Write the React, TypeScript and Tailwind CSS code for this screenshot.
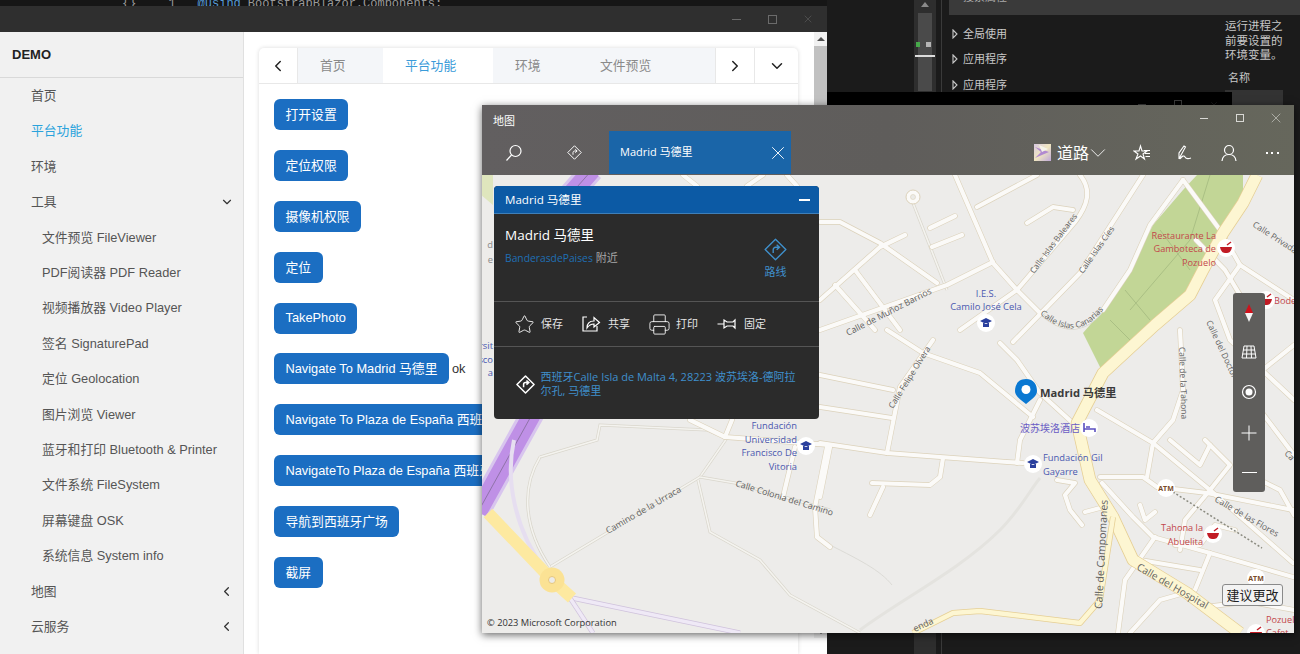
import React from 'react';
import { ChevronDown, ChevronLeft, ChevronRight, Star, Printer, X } from 'lucide-react';

const menuTop = [
  { label: '首页' },
  { label: '平台功能', active: true },
  { label: '环境' },
];

const toolItems = [
  '文件预览 FileViewer',
  'PDF阅读器 PDF Reader',
  '视频播放器 Video Player',
  '签名 SignaturePad',
  '定位 Geolocation',
  '图片浏览 Viewer',
  '蓝牙和打印 Bluetooth & Printer',
  '文件系统 FileSystem',
  '屏幕键盘 OSK',
  '系统信息 System info',
];

const buttons = [
  '打开设置',
  '定位权限',
  '摄像机权限',
  '定位',
  'TakePhoto',
  'Navigate To Madrid 马德里',
  'Navigate To Plaza de España 西班牙广场',
  'NavigateTo Plaza de España 西班牙广场',
  '导航到西班牙广场',
  '截屏',
];

// main white streets, global page coordinates
const streets = [
  'M955 175 L993 263 L1017 290 L1040 313',
  'M977 207 L1037 175',
  'M1143 175 L1080 273 L1013 342',
  'M1080 175 C1092 190 1088 205 1075 222 L1017 290 L960 330',
  'M820 330 L947 285 L993 262',
  'M1183 180 L1220 230 L1240 265 L1294 300',
  'M1183 180 L1150 225 L1130 270 L1103 310',
  'M820 375 L893 390',
  'M820 407 L892 418',
  'M820 443 L887 453 L1007 462 L1023 463',
  'M933 340 L900 387 L887 453',
  'M830 447 L820 497',
  'M943 458 L940 477 L930 485 L872 483',
  'M883 487 L870 515',
  'M887 330 L923 353 L980 373 L1033 417',
  'M1000 343 L1017 360 L1040 393 L1075 425',
  'M1040 400 L1020 440 L1017 463',
  'M1097 410 L1153 443 L1210 490 L1293 563',
  'M1100 477 L1143 477 L1157 487 L1207 493 L1293 510',
  'M1180 330 L1183 390 L1173 420 L1153 443 L1147 477',
  'M1102 483 L1133 517 L1153 537 L1210 553 L1293 577',
  'M1057 480 L1075 483 L1065 495 L1070 510 L1082 525',
  'M1085 512 L1100 508',
  'M1205 440 L1230 465 L1210 490 L1185 520 L1180 550',
  'M1175 545 L1200 545 L1215 525 L1235 530',
  'M1155 537 L1125 580 L1118 633',
  'M1210 553 L1195 590 L1160 600 L1130 633',
  'M1240 265 L1215 300 L1230 340 L1294 400',
  'M1250 380 L1294 345',
  'M1260 410 L1294 455',
  'M1196 240 L1225 270 L1240 295',
  'M1155 512 L1145 520 L1140 505',
  'M1170 440 L1200 465 L1210 445',
  'M1027 223 L1053 207 L1073 210',
  'M930 228 L955 216',
  'M932 247 L962 235',
  'M820 222 L840 222 L880 243 L937 283',
  'M820 300 L880 247 L905 235',
  'M835 285 L875 330',
  'M855 270 L900 330',
  'M1240 470 L1280 490 L1294 515',
  'M1140 560 L1200 570',
  'M1240 600 L1294 610',
  'M1205 607 L1260 600',
  'M683 175 L697 186',
  'M747 186 L763 175',
  'M787 175 L797 186',
  'M690 420 L725 437 L830 445',
  'M732 420 L725 437',
  'M795 447 L783 497',
  'M827 447 L815 507 L817 537 L830 547',
];

// thin lanes
const lanes = [
  'M913 203 L947 290',
  'M1103 310 Q1075 345 1040 313',
  'M550 567 L700 477 L727 438',
  'M540 457 L597 440 L600 425 L707 430 L723 437',
  'M700 477 L735 483 L830 510',
  'M540 457 C520 490 525 530 550 567',
  'M698 480 L710 532 L760 560 L790 595 L860 633',
];

const labels: { t: string; x: number; y: number; r: number; size: number }[] = [
  { t: 'Calle Islas Baleares', x: 1034, y: 274, r: -53, size: 8.2 },
  { t: 'Calle Islas Cíes', x: 1083, y: 274, r: -55, size: 8.2 },
  { t: 'Calle de Muñoz Barrios', x: 848, y: 336, r: -27, size: 8.8 },
  { t: 'Calle Felipe Olvera', x: 893, y: 409, r: -58, size: 8.3 },
  { t: 'Camino de la Urraca', x: 608, y: 534, r: -30, size: 9 },
  { t: 'Calle Colonia del Camino', x: 735, y: 486, r: 17, size: 8.8 },
  { t: 'Calle de Campomanes', x: 1102, y: 609, r: -87, size: 10.5 },
  { t: 'Calle del Hospital', x: 1136, y: 569, r: 30, size: 10 },
  { t: 'Calle de las Flores', x: 1214, y: 501, r: 30, size: 8.7 },
  { t: 'Calle de la Tahona', x: 1179, y: 347, r: 88, size: 8.5 },
  { t: 'Calle del Doctor', x: 1206, y: 322, r: 65, size: 8.5 },
  { t: 'Calle Privada', x: 1252, y: 226, r: 33, size: 8.5 },
  { t: 'Ca', x: 1284, y: 454, r: 45, size: 8.5 },
  { t: 'enda', x: 915, y: 632, r: -25, size: 9 },
];

const roadLabel = 'fill-[#5f5f5f]';

const MapCanvas: React.FC = () => (
  <svg
    viewBox="481 175 813 458"
    className="absolute -left-px top-[70px] w-[813px] h-[458px] font-['Open_Sans','Noto_Sans_CJK_SC',sans-serif]"
  >
    <rect x="481" y="175" width="813" height="458" fill="#edecea" />
    <path d="M481 175 L493 175 L493 205 L481 195 Z" fill="#dfe6bd" />
    {/* park */}
    <path
      d="M1197 175 L1243 175 L1243 203 L1223 233 L1203 270 L1190 295 L1155 325 L1103 373 L1083 333 L1103 310 L1130 270 L1153 225 L1183 190 Z"
      fill="#c2d696"
    />
    <path
      d="M1210 175 L1190 240 L1130 310 M1160 230 L1190 270 M1110 320 L1135 345 M1125 290 L1150 320"
      fill="none"
      stroke="#aabf84"
      strokeWidth="1"
    />
    {/* hillshade */}
    <path
      d="M860 630 C900 600 960 570 1000 530 C1020 510 1030 490 1040 478"
      fill="none"
      stroke="#e4e3df"
      strokeWidth="3"
    />
    <path d="M820 540 C860 560 880 570 892 585" fill="none" stroke="#dcdbd6" strokeWidth="1" />
    {lanes.map((d) => (
      <g key={d} fill="none">
        <path d={d} stroke="#d9d6cc" strokeWidth="3" />
        <path d={d} stroke="#f4f3ef" strokeWidth="1.6" />
      </g>
    ))}
    {/* highway on the left */}
    <path d="M592 170 L570 195 L540 400 L478 512" fill="none" stroke="#d8c5ee" strokeWidth="24" />
    <path d="M592 170 L570 195 L540 400 L478 512" fill="none" stroke="#bf90e6" strokeWidth="18" />
    <path d="M592 170 L570 195 L540 400 L478 512" fill="none" stroke="#8f73a8" strokeWidth="1" />
    <path d="M514 440 C505 480 515 530 545 570" fill="none" stroke="#e6def0" strokeWidth="4" />
    <path d="M572 598 L740 633" fill="none" stroke="#cfc2dc" strokeWidth="5" />
    <path d="M572 598 L740 633" fill="none" stroke="#efe9f6" strokeWidth="3.5" />
    <path d="M570 598 L593 633" fill="none" stroke="#cfc2dc" strokeWidth="5" />
    <path d="M570 598 L593 633" fill="none" stroke="#efe9f6" strokeWidth="3.5" />
    <path d="M488 513 L552 580 L572 598" fill="none" stroke="#fde9a0" strokeWidth="12" />
    <circle cx="552" cy="580" r="12.5" fill="#fbe294" />
    <circle cx="552" cy="580" r="3.5" fill="#ecebe8" stroke="#e8c87a" strokeWidth="1" />
    {streets.map((d) => (
      <path key={d} d={d} fill="none" stroke="#dcd2bb" strokeWidth="5.4" strokeLinecap="round" strokeLinejoin="round" />
    ))}
    {streets.map((d) => (
      <path key={d + 'w'} d={d} fill="none" stroke="#fbfaf8" strokeWidth="4.2" strokeLinecap="round" strokeLinejoin="round" />
    ))}
    {/* roundabout */}
    <circle cx="913" cy="197" r="7" fill="#fbfaf8" stroke="#dcd2bb" />
    <circle cx="913" cy="197" r="2.5" fill="#ecebe8" stroke="#dcd2bb" strokeWidth="0.6" />
    {/* main yellow roads */}
    {[
      'M1257 175 L1243 203 L1223 233 L1203 270 L1190 295 L1155 325 L1103 373 L1077 423 L1090 480 L1113 517 L1133 560 L1187 593 L1240 633',
      'M913 633 L953 613 L980 611 L1080 623 L1100 600 L1113 517',
    ].map((d, i) => (
      <g key={d} fill="none" strokeLinejoin="round">
        <path d={d} stroke="#e6cf94" strokeWidth={i ? 6 : 12.5} />
        <path d={d} stroke="#fdf6d2" strokeWidth={i ? 4.5 : 11} />
      </g>
    ))}
    <path d="M1173 492 L1262 548" fill="none" stroke="#8b8b80" strokeWidth="1.5" strokeDasharray="2 2" />
    {labels.map((l) => (
      <text
        key={l.t}
        x={l.x}
        y={l.y}
        fontSize={l.size}
        className={roadLabel}
        transform={`rotate(${l.r} ${l.x} ${l.y})`}
      >
        {l.t}
      </text>
    ))}
    <path id="canarias" d="M1040 314 Q1075 345 1104 309" fill="none" />
    <text fontSize="8.3" className={roadLabel}>
      <textPath href="#canarias">Calle Islas Canarias</textPath>
    </text>

    {/* points of interest */}
    <g fontSize="9.4" fill="#4a58b0">
      <text x="986" y="297" textAnchor="middle">I.E.S.</text>
      <text x="986" y="310" textAnchor="middle">Camilo José Cela</text>
      <text x="797" y="429" textAnchor="end">Fundación</text>
      <text x="797" y="443" textAnchor="end">Universidad</text>
      <text x="797" y="456" textAnchor="end">Francisco De</text>
      <text x="797" y="470" textAnchor="end">Vitoria</text>
      <text x="1043" y="461">Fundación Gil</text>
      <text x="1043" y="475">Gayarre</text>
      <text x="493" y="349" textAnchor="end">rsit</text>
      <text x="493" y="363" textAnchor="end">sco</text>
      <text x="493" y="376" textAnchor="end">a</text>
      <text x="1020" y="432" fontSize="10" fill="#6a5cc4">波苏埃洛酒店</text>
    </g>
    <g fontSize="9.4" fill="#8a8a8a">
      <text x="493" y="248" textAnchor="end">d</text>
      <text x="493" y="263" textAnchor="end">e</text>
    </g>
    <g fontSize="9.2" fill="#c2474a">
      <text x="1216" y="239" textAnchor="end">Restaurante La</text>
      <text x="1216" y="252" textAnchor="end">Gamboteca de</text>
      <text x="1216" y="266" textAnchor="end">Pozuelo</text>
      <text x="1274" y="304">Bode</text>
      <text x="1203" y="531" textAnchor="end">Tahona la</text>
      <text x="1203" y="545" textAnchor="end">Abuelita</text>
      <text x="1266" y="623">Pozuel</text>
      <text x="1266" y="636">Cafet</text>
    </g>
    {[[986, 323], [806, 446], [1033, 464]].map(([x, y]) => (
      <g key={x}>
        <circle cx={x} cy={y} r="9" fill="#fff" />
        <path d={`M${x - 6} ${y - 2} L${x} ${y - 5} L${x + 6} ${y - 2} L${x} ${y + 1} Z M${x - 3} ${y} V${y + 4} H${x + 3} V${y} Z`} fill="#2a3f9d" />
      </g>
    ))}
    {[[1226, 248], [1213, 534], [1266, 300], [1256, 633]].map(([x, y]) => (
      <g key={x}>
        <circle cx={x} cy={y} r="9" fill="#fff" />
        <path d={`M${x - 6} ${y - 1} H${x + 6} C${x + 5} ${y + 4} ${x + 3} ${y + 5} ${x} ${y + 5} C${x - 3} ${y + 5} ${x - 5} ${y + 4} ${x - 6} ${y - 1} Z`} fill="#c11b24" />
        <path d={`M${x + 1} ${y - 3} L${x + 5} ${y - 6}`} stroke="#c11b24" strokeWidth="1.4" />
      </g>
    ))}
    <circle cx="1089" cy="428" r="9" fill="#fff" />
    <path d="M1084 423 V432 M1084 429 H1095 V432 M1086 427 H1090" stroke="#5b4fc0" strokeWidth="1.6" fill="none" />
    {[[1166, 488], [1256, 578]].map(([x, y]) => (
      <g key={x}>
        <circle cx={x} cy={y} r="9" fill="#fff" />
        <text x={x} y={y + 2.5} fontSize="7" fontWeight="700" fill="#7a4a28" textAnchor="middle">ATM</text>
      </g>
    ))}
    {/* selected pin */}
    <path d="M1026 379 C1018 379 1015 385 1015 391 C1015 396 1020 399 1026 404 C1032 399 1037 396 1037 391 C1037 385 1034 379 1026 379 Z" fill="#0a78d2" />
    <circle cx="1026" cy="389.500" r="4.500" fill="#fff" />
    <text x="1040" y="397" fontSize="11.2" fontWeight="700" fill="#3a3a3a">Madrid 马德里</text>
    <text x="487" y="626" fontSize="9.3" fill="#333">© 2023 Microsoft Corporation</text>
  </svg>
);

const DirectionIcon: React.FC<{ size?: number; color?: string; width?: number }> = ({ size = 18, color = '#fff', width = 1.3 }) => (
  <svg width={size} height={size} viewBox="0 0 20 20" fill="none" stroke={color} strokeWidth={width}>
    <path d="M10 1 L19 10 L10 19 L1 10 Z" strokeLinejoin="round" />
    <path d="M8 13 V10 C8 9 9 8 10 8 H13 M11 5.800 L13.500 8 L11 10.200" />
  </svg>
);

const MapWindow: React.FC = () => (
  <div className="absolute left-[482px] top-[105px] w-[812px] h-[528px] overflow-hidden shadow-[0_2px_8px_rgba(0,0,0,0.6)] font-['Open_Sans','Noto_Sans_CJK_SC',sans-serif]">
    <MapCanvas />
    <div className="absolute left-0 top-0 w-full h-[70px] bg-gradient-to-r from-[#625f60] via-[#5f5d5b] to-[#66675c] text-white">
      <div className="flex items-center justify-between h-[26px]">
        <span className="pl-[11px] pt-[7px] text-[11px]">地图</span>
        <div className="flex items-center text-[#d8d8d4]">
          <div className="w-[36px] flex justify-center"><div className="w-[8px] h-px bg-[#d8d8d4]" /></div>
          <div className="w-[36px] flex justify-center"><div className="w-[8px] h-[8px] border border-[#d8d8d4]" /></div>
          <div className="w-[36px] flex justify-center"><X size={16} strokeWidth={0.9} /></div>
        </div>
      </div>
      <div className="flex items-stretch h-[43px]">
        <div className="w-[63px] flex items-center justify-center">
          <svg width="18" height="18" viewBox="0 0 18 18" fill="none" stroke="#fff" strokeWidth="1.200">
            <circle cx="10.500" cy="7" r="5.500" />
            <path d="M6.500 11 L1.500 16.500" />
          </svg>
        </div>
        <div className="w-[58px] flex items-center justify-center"><DirectionIcon size={15} /></div>
        <div className="ml-[6px] w-[182px] bg-[#1a65a8] flex items-center justify-between pl-[11px] pr-[2px] text-[11px]">
          <span>Madrid 马德里</span>
          <X size={22} strokeWidth={1} />
        </div>
        <div className="ml-auto flex items-center pr-[15.500px]">
          <div className="w-[17px] h-[17px] bg-gradient-to-br from-[#d8c8e0] via-[#f0e6c0] to-[#c0a8d8]">
            <svg width="17" height="17" viewBox="0 0 17 17">
              <path d="M1 3 L15 8 L1 14 L7 8 Z" fill="#b18ad0" />
              <path d="M5 1 L14 5 L8 8 Z" fill="#f5f3ea" />
            </svg>
          </div>
          <span className="ml-[6px] text-[16px]">道路</span>
          <ChevronDown size={26} strokeWidth={0.8} className="-ml-[4px]" />
          <svg width="18" height="18" viewBox="0 0 18 18" fill="none" stroke="#fff" strokeWidth="1.100" className="ml-[22px]">
            <path d="M7.500 2 L9 7 H14 L10 10 L11.500 15 L7.500 12 L3 15 L5 10 L1 7 H6 Z" />
            <path d="M11 6.500 H17 M12 9.500 H17 M12.500 12.500 H17" />
          </svg>
          <svg width="18" height="18" viewBox="0 0 18 18" fill="none" stroke="#fff" strokeWidth="1.100" className="ml-[25px]">
            <path d="M3 15 L3 9 L8 2 L9.500 3 L4.500 12 L3 15 M4 15 C6 12 8 11 9 13 C10 15 12 15 15 14" />
          </svg>
          <svg width="18" height="18" viewBox="0 0 18 18" fill="none" stroke="#fff" strokeWidth="1.200" className="ml-[26px]">
            <circle cx="9" cy="6" r="4.500" />
            <path d="M2 17 C2.500 12.500 5 10.500 9 10.500 C13 10.500 15.500 12.500 16 17" />
          </svg>
          <div className="ml-[27.500px] flex gap-[3.500px]">
            <span className="w-[2px] h-[2px] bg-white" />
            <span className="w-[2px] h-[2px] bg-white" />
            <span className="w-[2px] h-[2px] bg-white" />
          </div>
        </div>
      </div>
    </div>

    {/* place card */}
    <div className="absolute left-[12px] top-[81px] w-[325px] h-[233px] rounded-[4px] overflow-hidden bg-[#2b2b2b] text-white">
      <div className="h-[28px] pt-[1px] bg-[#0c5aa5] border-b border-[#3f7fb8] flex items-center justify-between pl-[11px] pr-[9px] text-[11.600px]">
        <span>Madrid 马德里</span>
        <div className="w-[11px] h-[1.500px] bg-white" />
      </div>
      <div className="h-[88px] border-b border-[#555] flex justify-between pl-[11px] pr-[32px] pt-[10px]">
        <div>
          <div className="text-[13.500px] leading-[22px]">Madrid 马德里</div>
          <div className="mt-[5px] text-[11px] leading-[14px] text-[#a8a8a8]">
            <span className="text-[#1f6fb4] text-[10.300px]">BanderasdePaises</span> 附近
          </div>
        </div>
        <div className="flex flex-col items-center pt-[14px] text-[#3f8fcb] text-[11px]">
          <DirectionIcon size={23} color="#3f8fcb" width={1.2} />
          <span className="mt-[3px]">路线</span>
        </div>
      </div>
      <div className="h-[45px] border-b border-[#555] flex items-center pl-[19.500px] text-[11px] text-[#e4e4e4]">
        <Star size={21} strokeWidth={1} className="text-white shrink-0" />
        <span className="ml-[6.500px]">保存</span>
        <svg width="20" height="20" viewBox="0 0 20 20" fill="none" stroke="#fff" strokeWidth="1.200" className="ml-[18px]">
          <path d="M6 3 H2 V17 H16 V12" />
          <path d="M6 14 C6 9 9 7 13 7 V3.500 L18.500 8.500 L13 13 V10 C10 10 8 11 6 14 Z" />
        </svg>
        <span className="ml-[7px]">共享</span>
        <Printer size={23} strokeWidth={0.9} className="ml-[17.500px] text-white shrink-0" />
        <span className="ml-[5.500px]">打印</span>
        <svg width="20" height="14" viewBox="0 0 20 14" fill="none" stroke="#fff" strokeWidth="1.200" className="ml-[19px]">
          <path d="M0.500 7 H7 M7 3 L10 5 H16 L18 3 V11 L16 9 H10 L7 11 Z" />
        </svg>
        <span className="ml-[7px]">固定</span>
      </div>
      <div className="flex items-center pl-[21.500px] pr-[20px] pt-[22.500px] text-[11px] leading-[14.500px] text-[#3f8fcb]">
        <div className="shrink-0 flex"><DirectionIcon size={19} width={1.6} /></div>
        <div className="ml-[6px]">西班牙Calle Isla de Malta 4, 28223 波苏埃洛-德阿拉尔孔, 马德里</div>
      </div>
    </div>

    {/* map tools */}
    <div className="absolute left-[751px] top-[188px] w-[32px] h-[199px] rounded-[3px] bg-[#5f5e5c] flex flex-col items-center pt-[11px] text-white">
      <svg width="10" height="18" viewBox="0 0 10 18">
        <path d="M5 0 L9 9 H1 Z" fill="#d0111b" />
        <path d="M5 18 L9 9 H1 Z" fill="#f4f4f4" />
      </svg>
      <svg width="16" height="14" viewBox="0 0 16 14" fill="none" stroke="#fff" strokeWidth="1" className="mt-[23px]">
        <path d="M3 1 H13 L15 13 H1 Z M2 5 H14 M1.500 9 H14.500 M6 1 L5.500 13 M10 1 L10.500 13" />
      </svg>
      <svg width="16" height="16" viewBox="0 0 16 16" fill="none" className="mt-[25px]">
        <circle cx="8" cy="8" r="6.500" stroke="#fff" strokeWidth="1.200" />
        <circle cx="8" cy="8" r="3.500" fill="#fff" />
      </svg>
      <svg width="16" height="16" viewBox="0 0 16 16" stroke="#fff" strokeWidth="1" className="mt-[25px]">
        <path d="M8 0.500 V15.500 M0.500 8 H15.500" />
      </svg>
      <div className="mt-[31px] w-[15px] h-px bg-white" />
    </div>

    <button className="absolute left-[740px] top-[479px] w-[61px] h-[22px] rounded-[3px] border border-[#8a8a8a] bg-[#f3f3f3] text-[13px] leading-none text-[#222]">
      建议更改
    </button>
  </div>
);

const BrowserWindow: React.FC = () => (
  <div className="absolute left-0 top-[6px] w-[827px] h-[648px] flex flex-col bg-white font-['Liberation_Sans','Noto_Sans_CJK_SC',sans-serif]">
    <div className="h-[26px] shrink-0 bg-[#2f2f2f] flex items-center justify-end pr-[1px] text-[#6b6b6b]">
      <div className="w-[36px] flex justify-center"><div className="w-[9px] h-px bg-[#6b6b6b]" /></div>
      <div className="w-[36px] flex justify-center"><div className="w-[9px] h-[9px] border border-[#6b6b6b]" /></div>
      <div className="w-[36px] flex justify-center"><X size={12} strokeWidth={1} /></div>
    </div>
    <div className="flex-1 flex min-h-0">
      {/* side menu */}
      <aside className="w-[244px] shrink-0 bg-[#f1f1f1] border-r border-[#e0e0e0] overflow-hidden text-[12.800px] text-[#555]">
        <div className="h-[46px] border-b border-[#d9d9d9] flex items-center pl-[12px] text-[13px] font-bold text-[#222]">DEMO</div>
        {menuTop.map((m) => (
          <div key={m.label} className={`h-[35.400px] flex items-center pl-[31px] ${m.active ? 'text-[#2ba3dc]' : ''}`}>
            {m.label}
          </div>
        ))}
        <div className="h-[35.400px] flex items-center justify-between pl-[31px] pr-[9px]">
          工具
          <ChevronDown size={14} strokeWidth={2} className="text-[#333]" />
        </div>
        {toolItems.map((t) => (
          <div key={t} className="h-[35.400px] flex items-center pl-[42px]">{t}</div>
        ))}
        {['地图', '云服务'].map((t) => (
          <div key={t} className="h-[35.400px] flex items-center justify-between pl-[31px] pr-[9px]">
            {t}
            <ChevronLeft size={15} strokeWidth={2} className="text-[#333]" />
          </div>
        ))}
      </aside>

      {/* main content */}
      <main className="flex-1 min-w-0 flex pl-[15px] pt-[16px]">
        <div className="w-[539px] shrink-0 rounded-t-[5px] shadow-[0_0_4px_rgba(0,0,0,0.15)] bg-white">
          <div className="h-[36px] flex border-b border-[#e8e8e8] text-[12.800px] text-[#8a8a8a]">
            <div className="w-[39px] flex items-center justify-center border-r border-[#e8e8e8]">
              <ChevronLeft size={18} strokeWidth={2} className="text-[#222]" />
            </div>
            <div className="w-[85px] bg-[#f4f6f9] flex items-center pl-[22px]">首页</div>
            <div className="w-[110px] flex items-center pl-[22px] text-[#3a9bd9]">平台功能</div>
            <div className="w-[71px] bg-[#f4f6f9] flex items-center pl-[22px]">环境</div>
            <div className="w-[151px] bg-[#f4f6f9] flex items-center pl-[36px]">文件预览</div>
            <div className="w-[40px] flex items-center justify-center border-l border-r border-[#e8e8e8]">
              <ChevronRight size={18} strokeWidth={2} className="text-[#222]" />
            </div>
            <div className="flex-1 flex items-center justify-center">
              <ChevronDown size={18} strokeWidth={2} className="text-[#222]" />
            </div>
          </div>
          <div className="pl-[15px] pt-[15px] flex flex-col items-start gap-[19.900px] text-[12.800px]">
            {buttons.map((b) => (
              <div key={b} className="flex items-center whitespace-nowrap">
                <button className="h-[31px] px-[11.500px] rounded-[6px] bg-[#1b6ec2] text-white">{b}</button>
                {b.includes('Madrid') && <span className="ml-[3px] text-[#333]">ok</span>}
              </div>
            ))}
          </div>
        </div>
        {/* page scrollbar */}
        <div className="ml-auto w-[13px] h-full -mt-[16px] bg-[#f1f1f1] flex flex-col items-center pb-[4px]">
          <div className="mt-[5px] w-0 h-0 border-x-[4px] border-x-transparent border-b-[4px] border-b-[#505050]" />
          <div className="mt-[5px] w-full h-[430px] bg-[#c1c1c1]" />
          <div className="mt-auto w-0 h-0 border-x-[4px] border-x-transparent border-t-[4px] border-t-[#505050]" />
        </div>
      </main>
    </div>
  </div>
);

const ToolWindow: React.FC = () => (
  <div className="absolute left-[827px] top-0 w-[473px] h-[654px] flex bg-[#1b1b1b] text-[#c8c8c8] text-[11px] font-['Open_Sans','Noto_Sans_CJK_SC',sans-serif]">
    <div className="w-[87px] shrink-0" />
    <div className="w-[22px] shrink-0 bg-[#2e2e2e] flex flex-col items-center pt-[2px]">
      <div className="w-0 h-0 border-x-[4px] border-x-transparent border-b-[5px] border-b-[#8a8a8a]" />
      <div className="mt-[6px] w-[14px] h-[78px] bg-[#4a4a4a] flex flex-col items-center">
        <div className="mt-[29px] w-full flex justify-between">
          <span className="-ml-[2px] w-[4px] h-[5px] bg-[#46a84a]" />
          <span className="mr-[1px] w-[5px] h-[5px] bg-[#b5b5b5]" />
        </div>
        <div className="mt-[8px] w-[20px] h-[2px] bg-[#dcdcdc] shrink-0" />
      </div>
    </div>
    <div className="w-[6px] shrink-0 border-r border-[#3a3a3a]" />
    <div className="flex-1 min-w-0 pl-[7px]">
      <div className="h-[15px] bg-[#3a3a3a] overflow-hidden pl-[14px]">
        <div className="-mt-[11px] text-[#aaa]">搜索属性</div>
      </div>
      <div className="flex">
        <div className="w-[276px] pt-[6px] pl-[3px]">
          {['全局使用', '应用程序', '应用程序'].map((t, i) => (
            <div key={i} className="h-[25.500px] flex items-center">
              <svg width="6" height="10" viewBox="0 0 6 10" fill="none" stroke="#c8c8c8" strokeWidth="1.100">
                <path d="M1 1 L5 5 L1 9 Z" />
              </svg>
              <span className="ml-[5px]">{t}</span>
            </div>
          ))}
        </div>
        <div className="pt-[4px]">
          <div className="leading-[14.500px] text-[11.500px] w-[60px]">运行进程之前要设置的环境变量。</div>
          <div className="mt-[7px] pl-[3px]">名称</div>
          <div className="mt-[4px] w-[58px] h-[30px] bg-[#333]" />
        </div>
      </div>
    </div>
  </div>
);

export default function App() {
  return (
    <div className="relative w-[1300px] h-[654px] overflow-hidden bg-[#1b1b1b]">
      {/* editor sliver above the browser window */}
      <div className="absolute left-0 top-0 w-[827px] h-[6px] overflow-hidden bg-[#161616] text-[12px] leading-[16px] text-[#9a9a9a] font-['Liberation_Mono',monospace]">
        <div className="-mt-[4px] flex whitespace-pre">
          <span className="ml-[122px]">{'{}'}</span>
          <span className="ml-[32px]">1</span>
          <span className="ml-[22px] text-[#569cd6]">@using</span>
          <span className="ml-[7px]">BootstrapBlazor.Components;</span>
        </div>
      </div>
      <ToolWindow />
      {/* black window hidden behind the map */}
      <div className="absolute left-[827px] top-[92px] w-[405px] h-[40px] bg-black flex justify-end pt-[8px] text-[#3a3a3a]">
        <div className="w-[36px] flex justify-center"><div className="mt-[4px] w-[8px] h-px bg-[#3a3a3a]" /></div>
        <div className="w-[36px] flex justify-center"><div className="w-[8px] h-[8px] border border-[#3a3a3a]" /></div>
        <div className="w-[36px] flex justify-center"><X size={10} strokeWidth={1} /></div>
      </div>
      <BrowserWindow />
      <MapWindow />
    </div>
  );
}
